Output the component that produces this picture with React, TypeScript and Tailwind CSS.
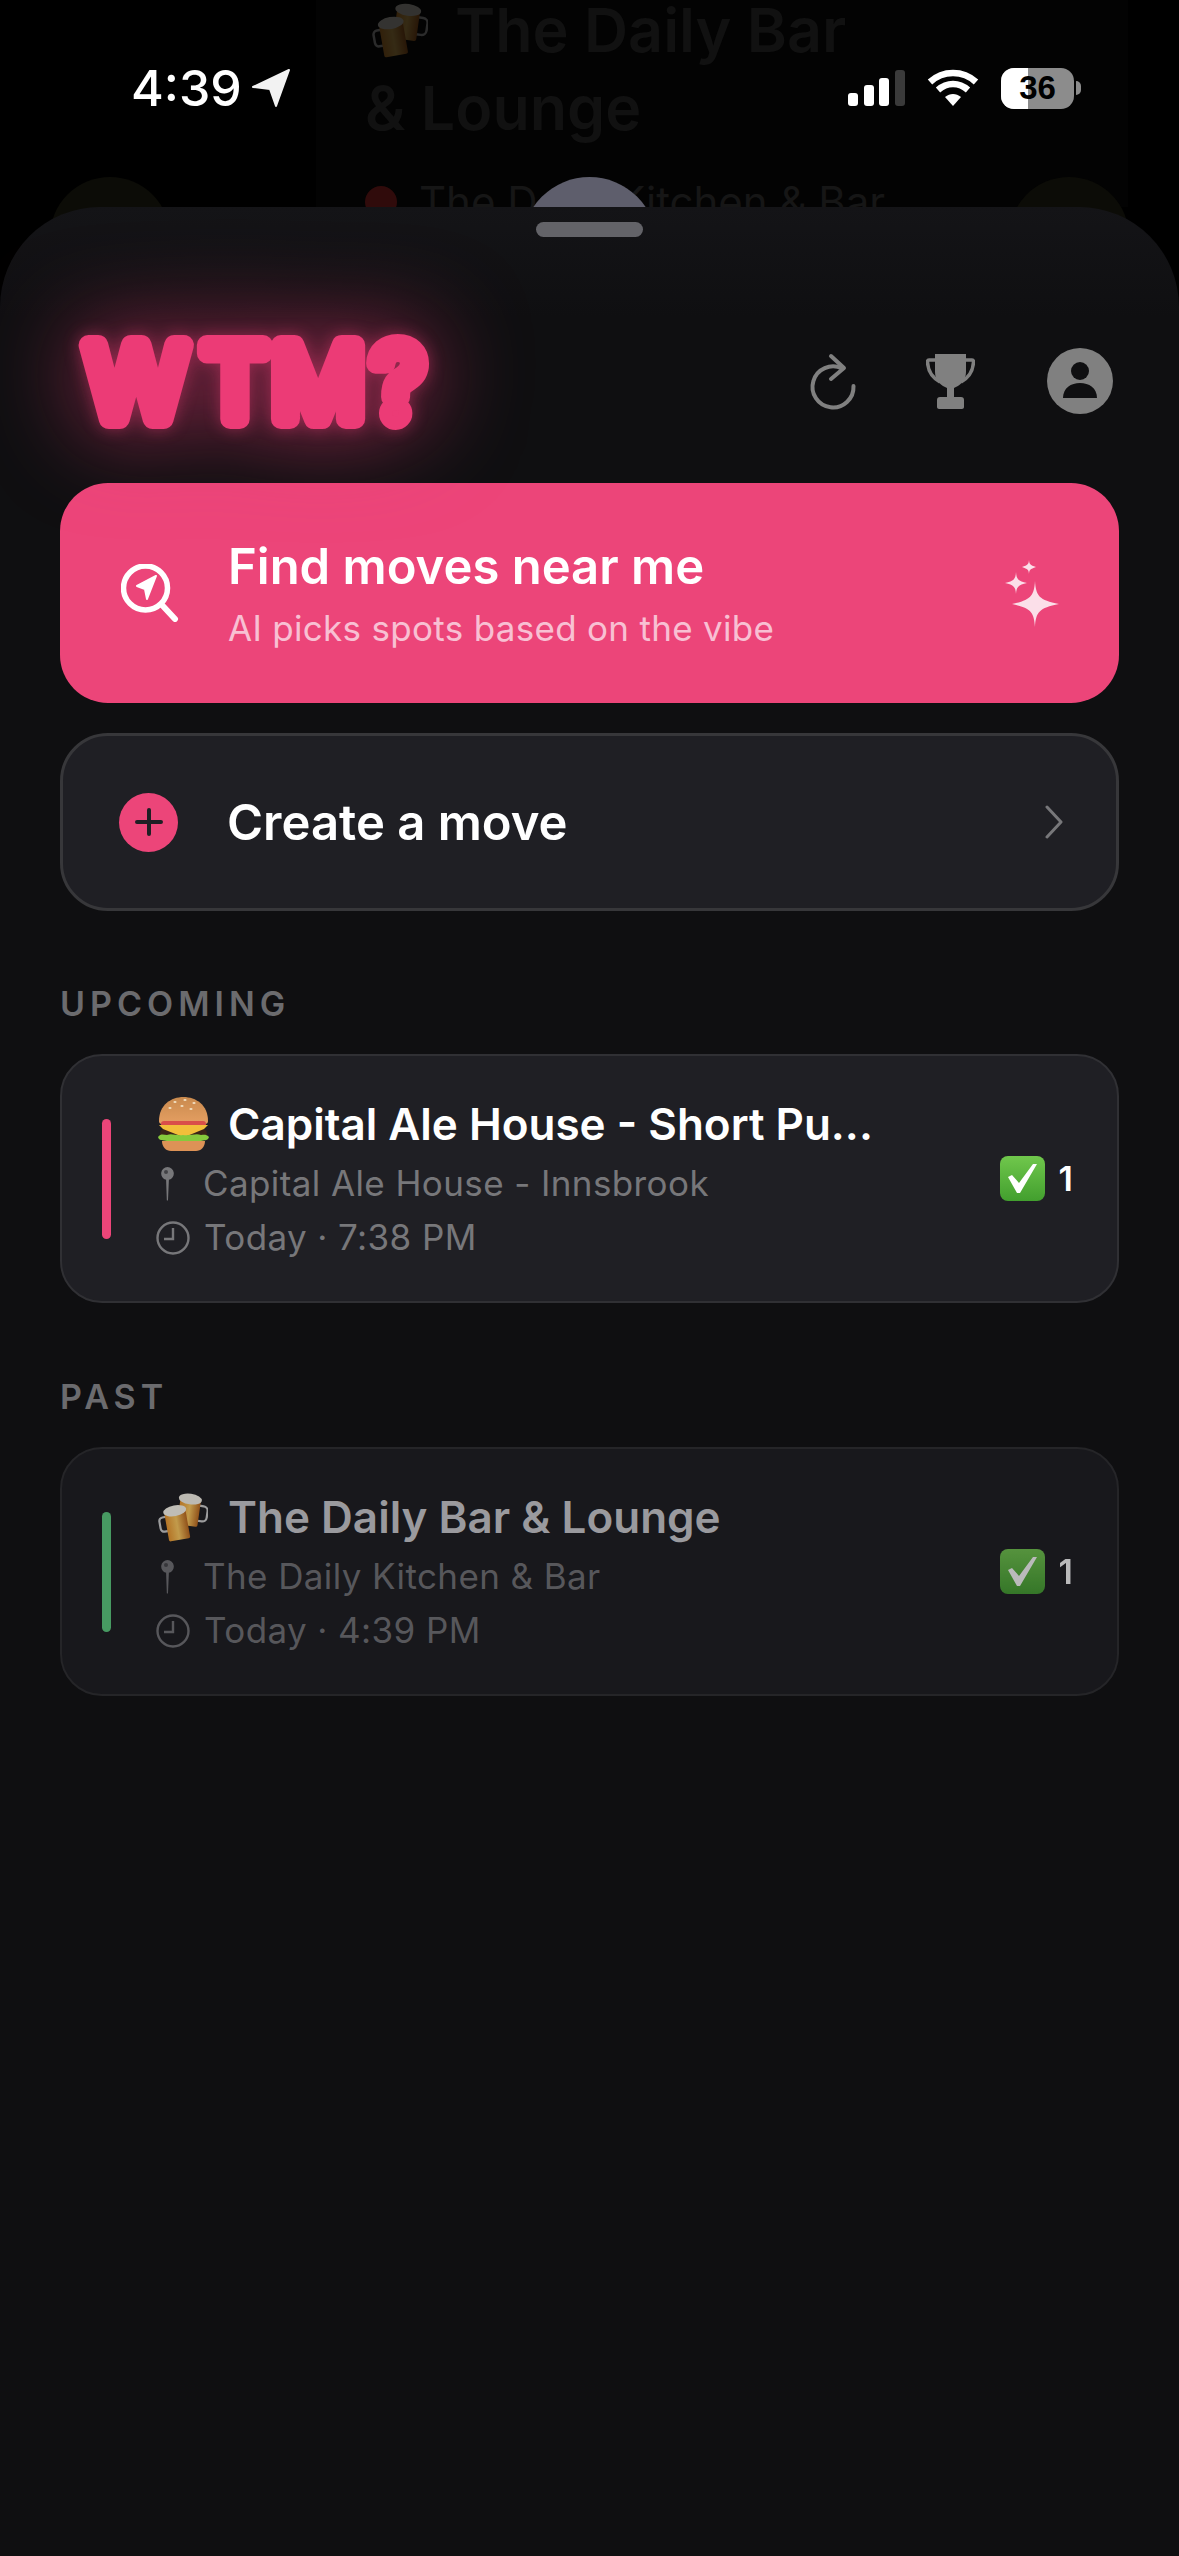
import React from 'react';

const FONT = "font-['Inter','Noto_Sans',sans-serif]";

function LocationArrow() {
  return (
    <svg width="40" height="40" viewBox="0 0 40 40" className="ml-[9px]">
      <path d="M38 2 L25 38 L19 21 L2 19 Z" fill="#f2f2f2" stroke="#f2f2f2" strokeWidth="2" strokeLinejoin="round" />
    </svg>
  );
}

function SignalBars() {
  return (
    <svg width="57" height="36" viewBox="0 0 57 36">
      <rect x="0" y="23" width="10" height="13" rx="3" fill="#fff" />
      <rect x="16" y="15" width="10" height="21" rx="3" fill="#fff" />
      <rect x="31" y="8" width="10" height="28" rx="3" fill="#fff" />
      <rect x="47" y="0" width="10" height="36" rx="3" fill="#3a3a3a" />
    </svg>
  );
}

function Wifi() {
  return (
    <svg width="52" height="38" viewBox="0 0 52 38" fill="none" stroke="#fff" strokeWidth="6.5">
      <path d="M3 13 C16 1 36 1 49 13" />
      <path d="M11 21 C20 13 32 13 41 21" />
      <path d="M26 37 L18 28 C23 24 29 24 34 28 Z" fill="#fff" stroke="none" />
    </svg>
  );
}

function Battery() {
  return (
    <div className="flex items-center">
      <div className="relative flex h-[41px] w-[73px] overflow-hidden rounded-[13px] bg-[#8c8c8c]">
        <div className="h-full w-[27px] bg-white" />
        <span className="absolute inset-0 flex items-center justify-center font-['Liberation_Sans',sans-serif] text-[33px] font-bold text-black">
          36
        </span>
      </div>
      <div className="ml-[2px] h-[14px] w-[5px] rounded-r-full bg-[#8c8c8c]" />
    </div>
  );
}

function BeersEmoji({ size = 56 }: { size?: number }) {
  return (
    <svg width={size} height={size} viewBox="0 0 56 56">
      <defs>
        <linearGradient id="beerFill" x1="0" y1="0" x2="1" y2="0">
          <stop offset="0" stopColor="#e8932a" />
          <stop offset="0.5" stopColor="#fbc75c" />
          <stop offset="1" stopColor="#b9651a" />
        </linearGradient>
      </defs>
      <g transform="rotate(8 36 24)">
        <path d="M45 14 h5 a5 5 0 0 1 5 5 v7 a5 5 0 0 1 -5 5 h-5" fill="none" stroke="#c8c8c8" strokeWidth="2.5" />
        <rect x="23" y="8" width="23" height="30" rx="2" fill="url(#beerFill)" />
        <ellipse cx="34" cy="8" rx="13" ry="6" fill="#f3efe4" />
      </g>
      <g transform="rotate(-10 20 34)">
        <path d="M11 26 h-5 a4 4 0 0 0 -4 4 v8 a4 4 0 0 0 4 4 h5" fill="none" stroke="#c8c8c8" strokeWidth="2.5" />
        <rect x="9" y="22" width="24" height="32" rx="2" fill="url(#beerFill)" />
        <ellipse cx="21" cy="21" rx="13" ry="6" fill="#f7f4ea" />
      </g>
    </svg>
  );
}

function BurgerEmoji() {
  return (
    <svg width="51" height="54" viewBox="0 0 51 54">
      <defs>
        <linearGradient id="bunTop" x1="0" y1="0" x2="0" y2="1">
          <stop offset="0" stopColor="#c98a4e" />
          <stop offset="1" stopColor="#e59f62" />
        </linearGradient>
      </defs>
      <path d="M1 24 C1 8 13 0 25.5 0 C38 0 50 8 50 24 C50 26 49 27 47 27 H4 C2 27 1 26 1 24 Z" fill="url(#bunTop)" />
      <g fill="#f1dfc0">
        <ellipse cx="17" cy="5" rx="1.6" ry="1" />
        <ellipse cx="27" cy="3" rx="1.6" ry="1" />
        <ellipse cx="36" cy="6" rx="1.6" ry="1" />
        <ellipse cx="24" cy="9" rx="1.6" ry="1" />
        <ellipse cx="12" cy="11" rx="1.6" ry="1" />
        <ellipse cx="33" cy="12" rx="1.6" ry="1" />
      </g>
      <rect x="3" y="24" width="45" height="6" rx="3" fill="#d94f4a" />
      <rect x="2" y="32" width="47" height="9" rx="4.5" fill="#3b2418" />
      <path d="M1 28 H50 L46 32 L29 39 L25 40 L20 38 L5 32 Z" fill="#f2bf3a" />
      <path d="M0 40 C3 36 6 38 9 38 C14 36 18 39 25 38 C32 39 38 36 43 38 C46 38 48 37 51 40 C50 44 46 43 43 44 C36 46 16 46 9 44 C5 43 1 44 0 40 Z" fill="#86c93c" />
      <path d="M4 44 H47 C47 50 43 54 38 54 H13 C8 54 4 50 4 44 Z" fill="#dd9256" />
    </svg>
  );
}

function CheckEmoji() {
  return (
    <svg width="45" height="45" viewBox="0 0 45 45">
      <defs>
        <linearGradient id="checkBox" x1="0" y1="0" x2="0" y2="1">
          <stop offset="0" stopColor="#70c74c" />
          <stop offset="1" stopColor="#429f2e" />
        </linearGradient>
      </defs>
      <rect width="45" height="45" rx="8" fill="url(#checkBox)" />
      <path d="M8 21 L12 19 L19 27 L33 8 H37 L20 37 H17 Z" fill="#fff" />
    </svg>
  );
}

function Pin({ color }: { color: string }) {
  return (
    <svg width="13" height="34" viewBox="0 0 13 34" className="shrink-0">
      <path d="M6.5 0 a6.5 6.5 0 0 1 1.4 12.8 L7 33 a0.6 0.6 0 0 1 -1.2 0 L5.1 12.8 A6.5 6.5 0 0 1 6.5 0 Z" fill={color} />
      <circle cx="5" cy="5" r="2" fill="#1f1f24" opacity="0.6" />
    </svg>
  );
}

function Clock({ color }: { color: string }) {
  return (
    <svg width="34" height="34" viewBox="0 0 34 34" fill="none" stroke={color} strokeWidth="2.4" className="shrink-0">
      <circle cx="17" cy="17" r="15.5" />
      <path d="M17 7 V18 H8" />
    </svg>
  );
}

type Move = {
  emoji: React.ReactNode;
  title: string;
  place: string;
  when: string;
  past?: boolean;
};

function MoveCard({ move }: { move: Move }) {
  const iconColor = move.past ? '#57575b' : '#77777a';
  return (
    <div
      className={`flex h-[249px] items-center rounded-[42px] border-2 pl-[40px] pr-[44px] ${
        move.past ? 'border-[#252528] bg-[#18181c]' : 'border-[#303034] bg-[#1f1f24]'
      }`}
    >
      <div className={`h-[120px] w-[9px] rounded-full ${move.past ? 'bg-[#479a62]' : 'bg-[#ec4579]'}`} />
      <div className="ml-[45px] min-w-0 flex-1">
        <div className="flex h-[56px] items-center">
          <div className="flex w-[72px] shrink-0 pl-[2px]">{move.emoji}</div>
          <span className={`truncate text-[44px] font-semibold ${move.past ? 'text-[#9a9a9e]' : 'text-white'}`}>
            {move.title}
          </span>
        </div>
        <div className={`flex h-[56px] items-center pt-[8px] text-[35px] ${move.past ? 'text-[#57575b]' : 'text-[#77777a]'}`}>
          <div className="flex w-[47px] shrink-0 pl-[5px]">
            <Pin color={iconColor} />
          </div>
          <span className="tracking-[0.4px]">{move.place}</span>
        </div>
        <div className={`flex h-[54px] items-center pt-[6px] text-[35px] ${move.past ? 'text-[#57575b]' : 'text-[#77777a]'}`}>
          <div className="flex w-[48px] shrink-0">
            <Clock color={iconColor} />
          </div>
          <span className="tracking-[0.4px]">{move.when}</span>
        </div>
      </div>
      <div className={`flex items-center gap-[14px] ${move.past ? 'opacity-70' : ''}`}>
        <CheckEmoji />
        <span className="text-[34px] font-semibold text-white">1</span>
      </div>
    </div>
  );
}

const moves: { label: string; item: Move }[] = [
  {
    label: 'UPCOMING',
    item: {
      emoji: <BurgerEmoji />,
      title: 'Capital Ale House - Short Pu...',
      place: 'Capital Ale House - Innsbrook',
      when: 'Today · 7:38 PM',
    },
  },
  {
    label: 'PAST',
    item: {
      emoji: <div className="opacity-75"><BeersEmoji size={50} /></div>,
      title: 'The Daily Bar & Lounge',
      place: 'The Daily Kitchen & Bar',
      when: 'Today · 4:39 PM',
      past: true,
    },
  },
];

export default function App() {
  return (
    <div className={`relative h-[2556px] w-[1179px] overflow-hidden bg-black ${FONT}`}>
      {/* screen dimmed behind the sheet */}
      <div className="absolute inset-0">
        <div className="ml-[316px] h-[207px] w-[812px] bg-[#030303] pl-[49px] text-[61px] font-semibold leading-[60px] text-[#111111]">
          <div className="flex h-[60px] items-center pl-[7px]">
            <div className="mr-[27px] opacity-20">
              <BeersEmoji size={56} />
            </div>
            The Daily Bar
          </div>
          <div className="mt-[18px] h-[60px]">&amp; Lounge</div>
          <div className="mt-[42px] flex items-center text-[42px] font-normal leading-[44px] text-[#161616]">
            <span className="mr-[22px] h-[32px] w-[32px] rounded-full bg-[#300b0b]" />
            The Daily Kitchen &amp; Bar
          </div>
        </div>
        <div className="absolute left-0 top-[177px] flex w-full justify-between px-[50px]">
          <div className="h-[120px] w-[120px] rounded-full bg-[#0c0c07]" />
          <div className="h-[135px] w-[135px] rounded-full bg-[#5e5e6c]" />
          <div className="h-[120px] w-[120px] rounded-full bg-[#0c0c07]" />
        </div>
      </div>

      {/* status bar */}
      <div className="absolute left-0 top-[66px] z-10 flex h-[44px] w-full items-center justify-between pl-[131px] pr-[98px]">
        <div className="flex items-center text-[50px] font-medium leading-none text-white">
          4:39
          <LocationArrow />
        </div>
        <div className="flex items-center gap-[22px]">
          <SignalBars />
          <Wifi />
          <Battery />
        </div>
      </div>

      {/* bottom sheet */}
      <div className="relative mt-[207px] flex h-[2349px] flex-col rounded-t-[100px] bg-[linear-gradient(#141417,#0f0f11_110px)] px-[60px] pt-[15px]">
        <div className="mx-auto h-[15px] w-[107px] rounded-full bg-[#636368]" />

        <div className="mt-[94px] flex h-[100px] items-center justify-between pl-[18px] pr-[6px]">
          <svg
            width="354"
            height="100"
            viewBox="0 0 354 100"
            className="overflow-visible [filter:drop-shadow(0_0_8px_rgba(236,59,118,0.45))_drop-shadow(0_0_48px_rgba(236,59,118,0.7))]"
          >
            <text
              x="8 124 194 294"
              y="88"
              fontFamily="Inter, sans-serif"
              fontWeight="400"
              fontSize="102"
              fill="#ec3b76"
              stroke="#ec3b76"
              strokeWidth="20"
              strokeLinejoin="round"
              strokeLinecap="round"
            >
              WTM?
            </text>
          </svg>
          <div className="flex items-center gap-[70px]">
            <svg width="48" height="58" viewBox="-1 -1 48 58" fill="none" stroke="#808080" strokeWidth="4" strokeLinecap="round" strokeLinejoin="round" className="overflow-visible">
              <path d="M33 15.5 A20.5 20.5 0 1 0 44.5 33" />
              <path d="M22 3 L35 15 L22 26" />
            </svg>
            <svg width="49" height="55" viewBox="0 0 49 55" fill="#808080">
              <path d="M9 0 H40 L40 18 C40 27 33 32 28 34 V43 H35 C37 43 38 44 38 46 V53 C38 54 37 55 36 55 H13 C12 55 11 54 11 53 V46 C11 44 12 43 14 43 H21 V34 C16 32 9 27 9 18 Z" />
              <path d="M10 6 H3 C1.5 6 1.5 7 1.5 8 C2 18 7 24 14 28 M39 6 H46 C47.5 6 47.5 7 47.5 8 C47 18 42 24 35 28" fill="none" stroke="#808080" strokeWidth="3.5" />
            </svg>
            <svg width="66" height="66" viewBox="0 0 66 66" className="ml-[2px]">
              <circle cx="33" cy="33" r="33" fill="#808080" />
              <circle cx="33" cy="23" r="9" fill="#0f0f11" />
              <path d="M16 50 C16 40 24 35 33 35 C42 35 50 40 50 50 Z" fill="#0f0f11" />
            </svg>
          </div>
        </div>

        <button className="mt-[52px] flex h-[220px] items-center rounded-[48px] bg-[#ec4579] pl-[61px] pr-[60px] text-left">
          <svg width="58" height="58" viewBox="0 0 58 58" fill="none" className="shrink-0">
            <circle cx="24.5" cy="24" r="22" stroke="#fff" strokeWidth="5.5" />
            <path d="M41 41 L54 55" stroke="#fff" strokeWidth="6" strokeLinecap="round" />
            <path d="M35 12 L16 22 L24 25 L26 35 Z" fill="#fff" stroke="#fff" strokeWidth="2" strokeLinejoin="round" />
          </svg>
          <div className="ml-[49px] flex-1">
            <div className="text-[49px] font-semibold leading-[60px] text-white">Find moves near me</div>
            <div className="mt-[9px] text-[35px] leading-[44px] tracking-[0.3px] text-[#f8c0d3]">AI picks spots based on the vibe</div>
          </div>
          <svg width="54" height="67" viewBox="0 0 54 67" fill="#fbdfe9" className="shrink-0">
            <path d="M30 21 C31 36 34 40 54 44 C34 48 31 52 30 67 C29 52 26 48 7 44 C26 40 29 36 30 21 Z" />
            <path d="M11 12 C11.5 19 13 21 22 23 C13 25 11.5 27 11 34 C10.5 27 9 25 0 23 C9 21 10.5 19 11 12 Z" />
            <path d="M24 0 C24.3 4 25 5 31 7 C25 9 24.3 10 24 14 C23.7 10 23 9 17 7 C23 5 23.7 4 24 0 Z" />
          </svg>
        </button>

        <button className="mt-[30px] flex h-[178px] items-center rounded-[48px] border-[3px] border-[#37373a] bg-[#1f1f24] pl-[56px] pr-[52px] text-left">
          <div className="flex h-[59px] w-[59px] shrink-0 items-center justify-center rounded-full bg-[#ec4579]">
            <svg width="30" height="30" viewBox="0 0 30 30" stroke="#1f1f24" strokeWidth="4" strokeLinecap="round">
              <path d="M15 3 V27 M3 15 H27" />
            </svg>
          </div>
          <span className="ml-[49px] flex-1 pt-[2px] text-[49px] font-semibold text-white">Create a move</span>
          <svg width="20" height="34" viewBox="0 0 20 34" fill="none" stroke="#77777a" strokeWidth="3" strokeLinecap="round" strokeLinejoin="round">
            <path d="M3 2 L17 17 L3 32" />
          </svg>
        </button>

        {moves.map(({ label, item }) => (
          <section key={label} className={item.past ? 'mt-[73px]' : 'mt-[72px]'}>
            <h2 className="mb-[31px] flex h-[40px] items-center pt-[1px] text-[34px] font-semibold tracking-[5px] text-[#6b6b6e]">
              {label}
            </h2>
            <MoveCard move={item} />
          </section>
        ))}
      </div>
    </div>
  );
}
